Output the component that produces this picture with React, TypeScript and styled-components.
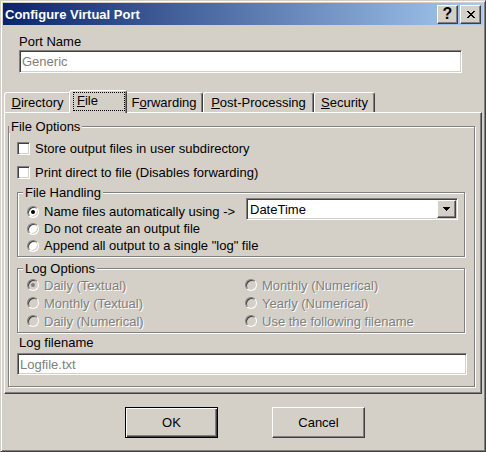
import React from 'react';
import styled, { createGlobalStyle, css } from 'styled-components';

const face = '#d4d0c8';

const GlobalStyle = createGlobalStyle`
  html, body {
    margin: 0;
    padding: 0;
    background: ${face};
  }
  body {
    font-family: "Liberation Sans", Arial, sans-serif;
    font-size: 13px;
  }
  * {
    box-sizing: border-box;
  }
`;

const raised = css`
  border: 1px solid;
  border-color: #fff #404040 #404040 #fff;
  box-shadow: inset -1px -1px #808080;
  background: ${face};
`;

const sunken = css`
  border: 1px solid;
  border-color: #808080 #fff #fff #808080;
  box-shadow: inset 1px 1px #404040, inset -1px -1px ${face};
`;

const Window = styled.div`
  width: 486px;
  height: 452px;
  background: ${face};
  border: 1px solid;
  border-color: ${face} #404040 #404040 ${face};
  box-shadow: inset 1px 1px #fff, inset -1px -1px #808080;
  padding: 2px;
  display: flex;
  flex-direction: column;
  color: #000;
  line-height: 15px;
`;

const TitleBar = styled.div`
  height: 22px;
  display: flex;
  align-items: center;
  padding: 0 2px;
  background: linear-gradient(to right, #0a246a, #a6caf0);
  color: #fff;
  font-weight: bold;
  font-size: 13px;
`;

const Title = styled.span`
  flex: 1;
`;

const TitleButtons = styled.div`
  display: flex;
  gap: 2px;
`;

const TitleButton = styled.button`
  ${raised};
  width: 21px;
  height: 19px;
  padding: 0;
  display: flex;
  align-items: center;
  justify-content: center;
  font-family: "Liberation Sans", Arial, sans-serif;
  font-weight: bold;
  font-size: 16px;
  line-height: 1;
  color: #000;
`;

const Body = styled.div`
  flex: 1;
  display: flex;
  flex-direction: column;
`;

const PortSection = styled.div`
  padding: 9px 0 0 16px;
`;

const FieldLabel = styled.div<{ $indent?: number; $gap?: number }>`
  height: 15px;
  padding-left: ${(p) => p.$indent ?? 0}px;
  margin-top: ${(p) => p.$gap ?? 0}px;
`;

const TextField = styled.input<{ $h: number; $gap: number }>`
  ${sunken};
  display: block;
  height: ${(p) => p.$h}px;
  margin-top: ${(p) => p.$gap}px;
  padding: 0 2px;
  background: #fff;
  color: #808080;
  font-family: "Liberation Sans", Arial, sans-serif;
  font-size: 13px;
  outline: none;
`;

const TabRow = styled.div`
  margin-top: 17px;
  height: 22px;
  padding-left: 1px;
  display: flex;
  align-items: flex-end;
`;

const Tab = styled.div<{ $w: number; $active?: boolean }>`
  width: ${(p) => (p.$active ? p.$w + 4 : p.$w)}px;
  height: ${(p) => (p.$active ? 23 : 20)}px;
  margin: 0 ${(p) => (p.$active ? -2 : 0)}px ${(p) => (p.$active ? -1 : 0)}px;
  border: 1px solid;
  border-bottom: none;
  border-color: #fff #404040 transparent #fff;
  border-radius: 3px 3px 0 0;
  box-shadow: inset -1px 0 #808080;
  background: ${face};
  display: flex;
  justify-content: ${(p) => (p.$active ? 'flex-start' : 'center')};
  align-items: flex-start;
  padding: ${(p) => (p.$active ? '1px 1px 0 3px' : '2px 0 0')};
  position: relative;
  z-index: ${(p) => (p.$active ? 2 : 0)};
  white-space: nowrap;
`;

const FocusBox = styled.span`
  width: 52px;
  height: 19px;
  border: 1px dotted #000;
  padding: 0 3px;
`;

const Key = styled.span`
  text-decoration: underline;
  text-underline-offset: 1px;
`;

const Panel = styled.div`
  margin: 0 1px;
  border: 1px solid;
  border-color: #fff #404040 #404040 #fff;
  box-shadow: inset -1px -1px #808080;
  padding: 7px 6px 6px 3px;
`;

const Group = styled.fieldset`
  margin: 0;
  padding: 0;
  min-width: 0;
  border: 1px solid #808080;
  box-shadow: inset 1px 1px #fff, 1px 1px #fff;
`;

const SubGroup = styled(Group)<{ $gap: number }>`
  margin-top: ${(p) => p.$gap}px;
`;

const Legend = styled.legend<{ $indent: number }>`
  margin-left: ${(p) => p.$indent}px;
  padding: 0 2px;
  line-height: 13px;
  background: ${face};
`;

const GroupContent = styled.div`
  padding: 3px 9px 11px 8px;
`;

const CheckRow = styled.label`
  display: flex;
  align-items: center;
  gap: 5px;
  height: 24px;
`;

const CheckBox = styled.span`
  ${sunken};
  width: 13px;
  height: 13px;
  background: #fff;
`;

const HandlingContent = styled.div`
  padding: 0 6px 2px 9px;
`;

const FirstRow = styled.div`
  display: flex;
  align-items: flex-end;
  margin-top: -1px;
`;

const RadioOption = styled.label<{ $h: number; $disabled?: boolean }>`
  display: flex;
  align-items: center;
  gap: 5px;
  height: ${(p) => p.$h}px;
  white-space: nowrap;
  color: ${(p) => (p.$disabled ? '#808080' : '#000')};
  text-shadow: ${(p) => (p.$disabled ? '1px 1px #fff' : 'none')};
`;

const Radio = styled.span<{ $checked?: boolean; $disabled?: boolean }>`
  flex: none;
  width: 12px;
  height: 12px;
  border-radius: 50%;
  border: 1px solid;
  border-color: #808080 #fff #fff #808080;
  box-shadow: inset 1px 1px #404040, inset -1px -1px ${face};
  background: ${(p) => (p.$disabled ? face : '#fff')};
  display: flex;
  align-items: center;
  justify-content: center;

  &::after {
    content: '';
    width: 4px;
    height: 4px;
    border-radius: 50%;
    background: ${(p) => (!p.$checked ? 'transparent' : p.$disabled ? '#808080' : '#000')};
  }
`;

const Select = styled.div`
  ${sunken};
  width: 212px;
  height: 22px;
  margin-left: auto;
  background: #fff;
  display: flex;
  align-items: center;
  justify-content: space-between;
  padding: 1px 1px 1px 3px;
`;

const SelectButton = styled.span`
  ${raised};
  width: 19px;
  height: 18px;
  display: flex;
  align-items: center;
  justify-content: center;
`;

const LogGrid = styled.div`
  display: grid;
  grid-template-columns: 218px 1fr;
  padding: 1px 0 2px 9px;
`;

const ButtonRow = styled.div`
  display: flex;
  justify-content: center;
  gap: 54px;
  padding: 13px 0 0 4px;
`;

const PushButton = styled.button<{ $default?: boolean }>`
  width: 93px;
  height: 31px;
  padding: 0;
  background: ${face};
  font-family: "Liberation Sans", Arial, sans-serif;
  font-size: 13px;
  color: #000;
  ${(p) =>
    p.$default
      ? css`
          border: 1px solid #000;
          box-shadow: inset 1px 1px #fff, inset -1px -1px #404040, inset -2px -2px #808080;
        `
      : raised}
`;

const CloseGlyph = () => (
  <svg width="8" height="7" viewBox="0 0 8 7" shapeRendering="crispEdges">
    <path
      fill="#000"
      d="M0 0h2v1H0z M6 0h2v1H6z M1 1h2v1H1z M5 1h2v1H5z M2 2h4v1H2z M3 3h2v1H3z M2 4h4v1H2z M1 5h2v1H1z M5 5h2v1H5z M0 6h2v1H0z M6 6h2v1H6z"
    />
  </svg>
);

const DropArrow = () => (
  <svg width="7" height="4" viewBox="0 0 7 4" shapeRendering="crispEdges">
    <path fill="#000" d="M0 0h7v1H0z M1 1h5v1H1z M2 2h3v1H2z M3 3h1v1H3z" />
  </svg>
);

const tabs = [
  { w: 67, pre: '', key: 'D', post: 'irectory' },
  { w: 54, pre: '', key: 'F', post: 'ile', active: true },
  { w: 78, pre: 'F', key: 'o', post: 'rwarding' },
  { w: 111, pre: '', key: 'P', post: 'ost-Processing' },
  { w: 61, pre: '', key: 'S', post: 'ecurity' },
];

const handling = [
  'Do not create an output file',
  'Append all output to a single "log" file',
];

const logOptions = [
  'Daily (Textual)',
  'Monthly (Numerical)',
  'Monthly (Textual)',
  'Yearly (Numerical)',
  'Daily (Numerical)',
  'Use the following filename',
];

export default function App() {
  return (
    <>
      <GlobalStyle />
      <Window>
        <TitleBar>
          <Title>Configure Virtual Port</Title>
          <TitleButtons>
            <TitleButton>?</TitleButton>
            <TitleButton>
              <CloseGlyph />
            </TitleButton>
          </TitleButtons>
        </TitleBar>

        <Body>
          <PortSection>
            <FieldLabel>Port Name</FieldLabel>
            <TextField $h={23} $gap={1} style={{ width: 443 }} value="Generic" readOnly />
          </PortSection>

          <TabRow>
            {tabs.map((t) => {
              const label = (
                <>
                  {t.pre}
                  <Key>{t.key}</Key>
                  {t.post}
                </>
              );
              return (
                <Tab key={t.key} $w={t.w} $active={t.active}>
                  {t.active ? <FocusBox>{label}</FocusBox> : label}
                </Tab>
              );
            })}
          </TabRow>

          <Panel>
            <Group>
              <Legend $indent={0}>File Options</Legend>
              <GroupContent>
                <CheckRow>
                  <CheckBox />
                  Store output files in user subdirectory
                </CheckRow>
                <CheckRow>
                  <CheckBox />
                  Print direct to file (Disables forwarding)
                </CheckRow>

                <SubGroup $gap={2}>
                  <Legend $indent={5}>File Handling</Legend>
                  <HandlingContent>
                    <FirstRow>
                      <RadioOption $h={17}>
                        <Radio $checked />
                        Name files automatically using -&gt;
                      </RadioOption>
                      <Select>
                        DateTime
                        <SelectButton>
                          <DropArrow />
                        </SelectButton>
                      </Select>
                    </FirstRow>
                    {handling.map((h) => (
                      <RadioOption key={h} $h={17}>
                        <Radio />
                        {h}
                      </RadioOption>
                    ))}
                  </HandlingContent>
                </SubGroup>

                <SubGroup $gap={5}>
                  <Legend $indent={5}>Log Options</Legend>
                  <LogGrid>
                    {logOptions.map((o, i) => (
                      <RadioOption key={o} $h={18} $disabled>
                        <Radio $disabled $checked={i === 0} />
                        {o}
                      </RadioOption>
                    ))}
                  </LogGrid>
                </SubGroup>

                <FieldLabel $indent={2} $gap={2}>
                  Log filename
                </FieldLabel>
                <TextField $h={22} $gap={3} style={{ width: 'calc(100% + 2px)' }} value="Logfile.txt" readOnly />
              </GroupContent>
            </Group>
          </Panel>

          <ButtonRow>
            <PushButton $default>OK</PushButton>
            <PushButton>Cancel</PushButton>
          </ButtonRow>
        </Body>
      </Window>
    </>
  );
}
